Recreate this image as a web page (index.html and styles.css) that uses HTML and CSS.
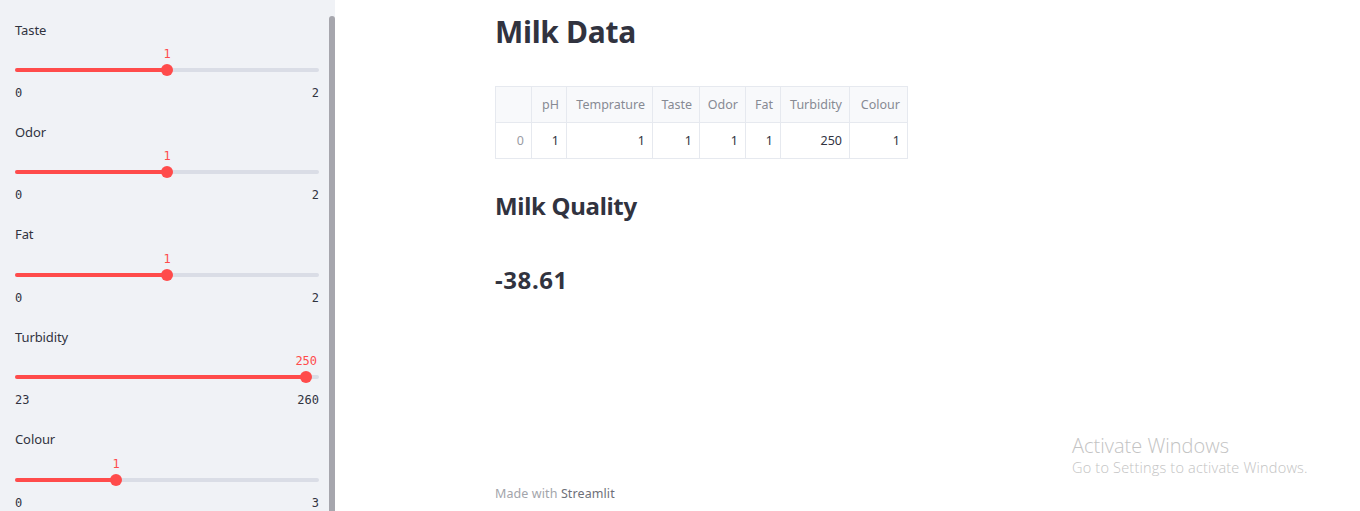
FILE: index.html
```html
<!DOCTYPE html>
<html>
<head>
<meta charset="utf-8">
<link rel="stylesheet" href="styles.css">
</head>
<body>
<div class="app">
  <aside class="sidebar">
    <div class="slider">
      <div class="label">Taste</div>
      <div class="track-area">
        <div class="value" style="left:50%">1</div>
        <div class="track"><div class="fill" style="width:50%"></div><div class="thumb" style="left:50%"></div></div>
      </div>
      <div class="range"><span>0</span><span>2</span></div>
    </div>
    <div class="slider">
      <div class="label">Odor</div>
      <div class="track-area">
        <div class="value" style="left:50%">1</div>
        <div class="track"><div class="fill" style="width:50%"></div><div class="thumb" style="left:50%"></div></div>
      </div>
      <div class="range"><span>0</span><span>2</span></div>
    </div>
    <div class="slider">
      <div class="label">Fat</div>
      <div class="track-area">
        <div class="value" style="left:50%">1</div>
        <div class="track"><div class="fill" style="width:50%"></div><div class="thumb" style="left:50%"></div></div>
      </div>
      <div class="range"><span>0</span><span>2</span></div>
    </div>
    <div class="slider">
      <div class="label">Turbidity</div>
      <div class="track-area">
        <div class="value" style="left:95.8%">250</div>
        <div class="track"><div class="fill" style="width:95.8%"></div><div class="thumb" style="left:95.8%"></div></div>
      </div>
      <div class="range"><span>23</span><span>260</span></div>
    </div>
    <div class="slider">
      <div class="label">Colour</div>
      <div class="track-area">
        <div class="value" style="left:33.3%">1</div>
        <div class="track"><div class="fill" style="width:33.3%"></div><div class="thumb" style="left:33.3%"></div></div>
      </div>
      <div class="range"><span>0</span><span>3</span></div>
    </div>
    <div class="scrollbar"></div>
  </aside>
  <main class="main">
    <div class="content">
      <h1 class="title">Milk Data</h1>
      <table class="df">
        <colgroup>
          <col class="c-idx"><col class="c-ph"><col class="c-temp"><col class="c-taste"><col class="c-odor"><col class="c-fat"><col class="c-turb"><col class="c-col">
        </colgroup>
        <thead>
          <tr><th></th><th>pH</th><th>Temprature</th><th>Taste</th><th>Odor</th><th>Fat</th><th>Turbidity</th><th>Colour</th></tr>
        </thead>
        <tbody>
          <tr><th class="idx">0</th><td>1</td><td>1</td><td>1</td><td>1</td><td>1</td><td>250</td><td>1</td></tr>
        </tbody>
      </table>
      <h2 class="subtitle">Milk Quality</h2>
      <h3 class="result">-38.61</h3>
      <div class="spacer"></div>
      <footer class="footer">Made with <span>Streamlit</span></footer>
    </div>
    <div class="watermark">
      <div class="wm-title">Activate Windows</div>
      <div class="wm-sub">Go to Settings to activate Windows.</div>
    </div>
  </main>
</div>
</body>
</html>
```

FILE: styles.css
```css
* { box-sizing: border-box; }
html, body { margin: 0; padding: 0; }
body {
  font-family: "Noto Sans", "Open Sans", sans-serif;
  color: #31333f;
  background: #ffffff;
  width: 1360px;
  height: 511px;
  overflow: hidden;
}
.app {
  display: flex;
  height: 511px;
}
.sidebar {
  position: relative;
  width: 335px;
  flex: 0 0 335px;
  background: #f0f2f6;
  padding: 20.5px 16px 0 15px;
  overflow: hidden;
}
.scrollbar {
  position: absolute;
  left: 329px;
  top: 16px;
  width: 6px;
  height: 510px;
  background: #a6a6ad;
  border-radius: 3px 3px 0 0;
}
.slider {
  display: flex;
  flex-direction: column;
  margin-bottom: 19.9px;
}
.label {
  font-size: 13px;
  line-height: 18px;
  height: 18px;
  color: #31333f;
  letter-spacing: -0.1px;
}
.track-area {
  position: relative;
  margin-top: 5.5px;
  padding-top: 20px;
  height: 32px;
}
.value {
  position: absolute;
  top: 1px;
  transform: translateX(-50%);
  font-family: "DejaVu Sans Mono", "Liberation Mono", monospace;
  font-size: 12px;
  line-height: 18px;
  color: #ff4b4b;
}
.track {
  position: relative;
  height: 4px;
  margin-top: 4px;
  background: #dadde6;
  border-radius: 2px;
}
.fill {
  height: 4px;
  background: #ff4b4b;
  border-radius: 2px;
}
.thumb {
  position: absolute;
  top: -4px;
  width: 12px;
  height: 12px;
  margin-left: -6px;
  border-radius: 50%;
  background: #ff4b4b;
}
.range {
  display: flex;
  justify-content: space-between;
  margin-top: 9px;
  font-family: "DejaVu Sans Mono", "Liberation Mono", monospace;
  font-size: 12px;
  line-height: 16px;
  height: 18px;
  color: #31333f;
}
.main {
  position: relative;
  flex: 1;
  height: 511px;
}
.content {
  display: flex;
  flex-direction: column;
  padding-left: 160px;
  height: 511px;
}
.title {
  margin: 12px 0 0 0;
  font-size: 30px;
  line-height: 40px;
  font-weight: 700;
  color: #31333f;
  letter-spacing: -0.3px;
}
.df {
  margin-top: 34px;
  border-collapse: collapse;
  table-layout: fixed;
  width: 412px;
  font-size: 12.5px;
}
.df th, .df td {
  border: 1px solid #e6e9ef;
  height: 36px;
  padding: 0 7px;
  text-align: right;
  white-space: nowrap;
  font-weight: 400;
}
.df thead th {
  background: #f8f9fb;
  color: #878a93;
}
.df td { color: #31333f; }
.df .idx { color: #9a9ca3; }
.c-idx { width: 36px; }
.c-ph { width: 35px; }
.c-temp { width: 86px; }
.c-taste { width: 47px; }
.c-odor { width: 46px; }
.c-fat { width: 35px; }
.c-turb { width: 69px; }
.c-col { width: 58px; }
.subtitle {
  margin: 30px 0 0 0;
  font-size: 24px;
  line-height: 34px;
  font-weight: 700;
  color: #31333f;
  letter-spacing: -0.3px;
}
.result {
  margin: 40px 0 0 0;
  font-size: 24px;
  line-height: 34px;
  font-weight: 700;
  color: #31333f;
  letter-spacing: 0.6px;
}
.spacer { flex: 1; }
.footer {
  font-size: 12.5px;
  line-height: 18px;
  margin-bottom: 8px;
  color: #a3a5ab;
  letter-spacing: 0.1px;
}
.footer span { color: #6e7079; }
.watermark {
  position: absolute;
  left: 737px;
  top: 434px;
  color: #c3c3c3;
  font-family: "Open Sans", "Noto Sans", sans-serif;
}
.wm-title {
  font-size: 20px;
  line-height: 24px;
  font-weight: 300;
}
.wm-sub {
  font-size: 14.5px;
  line-height: 20px;
  font-weight: 300;
  letter-spacing: 0.2px;
}
```
